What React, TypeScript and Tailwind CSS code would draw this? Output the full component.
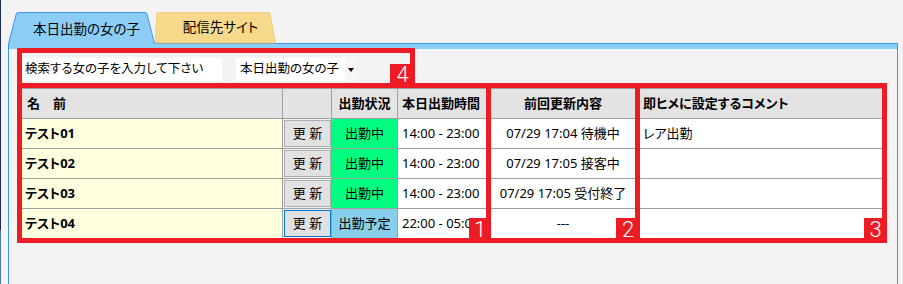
import React from "react";

const rows = [
  { name: "テスト01", status: "出勤中", green: true, time: "14:00 - 23:00", prev: "07/29 17:04 待機中", comment: "レア出勤", focus: false },
  { name: "テスト02", status: "出勤中", green: true, time: "14:00 - 23:00", prev: "07/29 17:05 接客中", comment: "", focus: false },
  { name: "テスト03", status: "出勤中", green: true, time: "14:00 - 23:00", prev: "07/29 17:05 受付終了", comment: "", focus: false },
  { name: "テスト04", status: "出勤予定", green: false, time: "22:00 - 05:00", prev: "---", comment: "", focus: true },
];

const cell = "h-[30px] border-r border-b border-[#a0a0a0] flex items-center overflow-hidden whitespace-nowrap";

export default function App() {
  return (
    <div className="w-[903px] h-[284px] bg-[#f3f3f3] relative overflow-hidden flex text-[13px] text-black font-['Noto_Sans','Noto_Sans_CJK_JP',sans-serif] [font-feature-settings:'palt']">
      <div className="w-px h-full flex flex-col">
        <div className="h-[230px] bg-[#1c2f5c]" />
        <div className="flex-1 bg-[#5074ac]" />
      </div>
      <div className="flex-1 pl-[7px] pt-[12px] flex flex-col">
        {/* tabs */}
        <div className="h-[32px] flex -mb-px relative z-10">
          <div className="relative w-[147px] h-[32px] flex items-center justify-center pl-[10px] pt-[2px]">
            <svg className="absolute inset-0" width="147" height="32" viewBox="0 0 147 32">
              <path d="M0.5,32 L8.2,2 Q8.7,0.5 10.5,0.5 L137,0.5 Q138.6,0.5 139,2 L146.5,32 Z" fill="#8ccdf7" />
              <path d="M0.5,32 L8.2,2 Q8.7,0.5 10.5,0.5 L137,0.5 Q138.6,0.5 139,2 L146.5,31.5 L147,31.5" fill="none" stroke="#3c96f0" strokeWidth="1" />
            </svg>
            <span className="relative text-[13.5px]">本日出勤の女の子</span>
          </div>
          <div className="relative w-[121px] h-[32px] flex items-center justify-center pl-[10px] pt-[1px]">
            <svg className="absolute inset-0" width="121" height="32" viewBox="0 0 121 32">
              <path d="M0.2,31 L1.8,2 Q2.2,0.5 4,0.5 L113,0.5 Q114.6,0.5 115,2 L120.5,31 Z" fill="#f6d98b" stroke="#ecc86e" strokeWidth="0.8" />
            </svg>
            <span className="relative pb-[2px] text-[13.5px]">配信先サイト</span>
          </div>
        </div>
        {/* panel */}
        <div className="w-[890px] flex-1 border-x border-t border-[#3c96f0] bg-[#f3f3f3] flex flex-col">
          <div className="h-[5px] bg-[#8ccdf7]" />
          <div className="pl-[13px] pt-[9px] flex gap-[14px]">
            <div className="w-[200px] h-[23px] bg-white flex items-center pl-[3px] text-[12.5px]">検索する女の子を入力して下さい</div>
            <div className="w-[121px] h-[23px] bg-white flex items-center justify-between text-[12.5px]">
              <span className="pl-[4px]">本日出勤の女の子</span>
              <span className="w-[12px] h-full bg-[#f7f7f7] flex items-center justify-center">
                <span className="w-0 h-0 border-l-[3px] border-r-[3px] border-t-[4px] border-l-transparent border-r-transparent border-t-black" />
              </span>
            </div>
          </div>
          <div className="ml-[11px] mt-[7px] w-[866px] border-l border-t border-[#a0a0a0] grid grid-cols-[262px_49px_66px_91px_149px_248px]">
            <div className={`${cell} bg-[#e3e3e3] font-bold pl-[6px]`}>名　前</div>
            <div className={`${cell} bg-[#e3e3e3]`} />
            <div className={`${cell} bg-[#e3e3e3] font-bold justify-center`}>出勤状況</div>
            <div className={`${cell} bg-[#e3e3e3] font-bold pl-[4px]`}>本日出勤時間</div>
            <div className={`${cell} bg-[#e3e3e3] font-bold justify-center`}>前回更新内容</div>
            <div className={`${cell} bg-[#e3e3e3] font-bold pl-[5px]`}>即ヒメに設定するコメント</div>
            {rows.map((r) => (
              <React.Fragment key={r.name}>
                <div className={`${cell} bg-[#ffffe0] font-bold pl-[4px]`}>{r.name}</div>
                <div className={`${cell} bg-[#f0f0f0]`}>
                  <button
                    className={`ml-px w-[47px] h-[27px] border ${r.focus ? "border-[#0078d7]" : "border-[#adadad]"} bg-[#e1e1e1] flex items-center justify-center text-[13px]`}
                  >
                    更 新
                  </button>
                </div>
                <div className={`${cell} ${r.green ? "bg-[#00ff80]" : "bg-[#87ceeb]"} justify-center`}>{r.status}</div>
                <div className={`${cell} bg-white pl-[4px]`}>{r.time}</div>
                <div className={`${cell} bg-white justify-center`}>{r.prev}</div>
                <div className={`${cell} bg-white pl-[5px]`}>{r.comment}</div>
              </React.Fragment>
            ))}
          </div>
        </div>
      </div>

      {/* annotation boxes */}
      <div className="absolute left-[17px] top-[48px] w-[398px] h-[40px] border-[5px] border-[#ed1c24]" />
      <div className="absolute left-[17px] top-[83px] w-[474px] h-[160px] border-[5px] border-[#ed1c24]" />
      <div className="absolute left-[486px] top-[83px] w-[154px] h-[160px] border-[5px] border-[#ed1c24]" />
      <div className="absolute left-[635px] top-[83px] w-[252px] h-[160px] border-[5px] border-[#ed1c24]" />
      <div className="absolute left-[390px] top-[64px] w-[25px] h-[24px] bg-[#ed1c24] text-white text-[22px] leading-none flex items-end justify-center pb-[2px] font-['Roboto',sans-serif] font-light">4</div>
      <div className="absolute left-[469px] top-[218px] w-[22px] h-[25px] bg-[#ed1c24] text-white text-[22px] leading-none flex items-end justify-center pb-[2px] font-['Roboto',sans-serif] font-light">1</div>
      <div className="absolute left-[616px] top-[218px] w-[24px] h-[25px] bg-[#ed1c24] text-white text-[22px] leading-none flex items-end justify-center pb-[2px] font-['Roboto',sans-serif] font-light">2</div>
      <div className="absolute left-[864px] top-[218px] w-[23px] h-[25px] bg-[#ed1c24] text-white text-[22px] leading-none flex items-end justify-center pb-[2px] font-['Roboto',sans-serif] font-light">3</div>
    </div>
  );
}
